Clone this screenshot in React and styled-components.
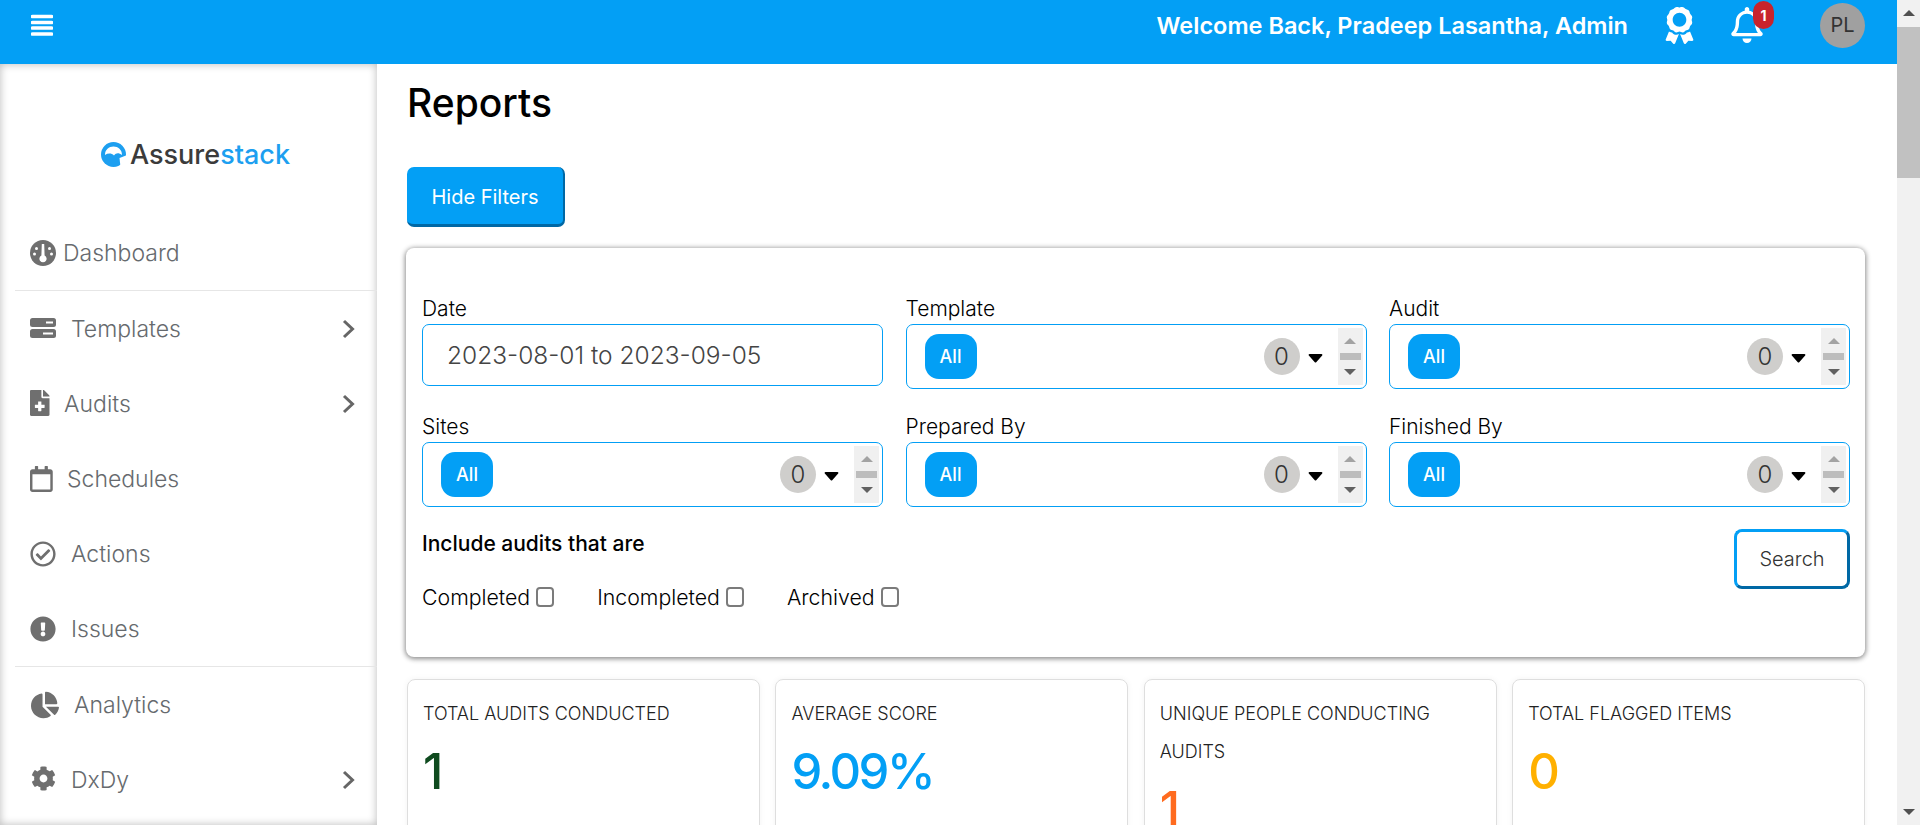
import React from "react";
import styled, { createGlobalStyle } from "styled-components";
import {
  FaAward,
  FaChartPie,
  FaCog,
  FaExclamationCircle,
  FaFileMedical,
  FaRegBell,
  FaRegCalendar,
  FaRegCheckCircle,
} from "react-icons/fa";

const BLUE = "#039ff5";
const DARK_BLUE = "#0068a5";
const GREY = "#6f6f6f";

const GlobalStyle = createGlobalStyle`
  html, body {
    margin: 0;
    height: 100%;
    overflow: hidden;
    background: #fff;
    font-family: Inter, "Liberation Sans", sans-serif;
  }
  * {
    box-sizing: border-box;
  }
`;

const Screen = styled.div`
  display: flex;
  width: 1920px;
  height: 825px;
  overflow: hidden;
`;

const Page = styled.div`
  width: 1897px;
  display: flex;
  flex-direction: column;
`;

const Header = styled.header`
  height: 64px;
  flex: none;
  background: ${BLUE};
  display: flex;
  justify-content: space-between;
  align-items: flex-start;
  padding: 0 32px 0 31px;
  color: #fff;
`;

const MenuButton = styled.svg`
  width: 22px;
  height: 22px;
  margin-top: 14px;
`;

const HeaderRight = styled.div`
  display: flex;
  align-items: center;
  height: 50px;
`;

const Welcome = styled.span`
  font-size: 23.5px;
  font-weight: 600;
  margin-right: 37px;
`;

const AwardIcon = styled(FaAward)`
  width: 29px;
  height: 37px;
  margin-right: 37px;
`;

const BellWrap = styled.div`
  position: relative;
  width: 32px;
  height: 36px;
  margin-right: 57px;
`;

const BellIcon = styled(FaRegBell)`
  width: 32px;
  height: 36px;
`;

const Badge = styled.span`
  position: absolute;
  left: 22px;
  top: -6px;
  width: 21px;
  height: 28px;
  border-radius: 11px;
  background: #c8232c;
  color: #fff;
  font-size: 14px;
  font-weight: 700;
  display: flex;
  align-items: center;
  justify-content: center;
`;

const Avatar = styled.div`
  width: 45px;
  height: 45px;
  border-radius: 50%;
  background: #a0a0a0;
  color: #333;
  font-size: 20px;
  display: flex;
  align-items: center;
  justify-content: center;
`;

const Body = styled.div`
  flex: 1;
  display: flex;
  min-height: 0;
`;

const Sidebar = styled.aside`
  width: 377px;
  flex: none;
  box-shadow: inset 0 0 8px rgba(0, 0, 0, 0.28);
  color: ${GREY};
`;

const LogoBox = styled.div`
  height: 151px;
  display: flex;
  align-items: center;
  padding-left: 101px;
  padding-top: 29px;
`;

const LogoMark = styled.svg`
  width: 25px;
  height: 25px;
  margin-right: 4px;
`;

const LogoText = styled.span`
  font-size: 27px;
  font-weight: 500;
  color: #3b3b3b;
`;

const LogoAccent = styled.span`
  color: #1d9ff0;
`;

const NavRow = styled.div`
  height: 75px;
  display: flex;
  align-items: center;
  padding-left: 30px;
  padding-right: 22px;
`;

const NavIconBox = styled.span`
  display: flex;
  align-items: center;
  width: ${(p) => p.$offset}px;
  flex: none;
  padding-left: ${(p) => p.$nudge || 0}px;
  margin-top: ${(p) => p.$lift || 0}px;
`;

const NavLabel = styled.span`
  flex: 1;
  font-size: 23px;
  font-weight: 300;
  color: #666a6e;
`;

const Chevron = styled.svg`
  width: 13px;
  height: 20px;
`;

const NavDivider = styled.div`
  height: 1px;
  margin-left: 15px;
  background: #e6e6e6;
`;

const Main = styled.main`
  flex: 1;
  min-width: 0;
  padding: 17px 32px 0 29px;
  overflow: hidden;
`;

const Title = styled.h1`
  margin: 0 0 42px 1px;
  font-size: 39px;
  line-height: 44px;
  font-weight: 500;
  color: #000;
`;

const PrimaryButton = styled.button`
  display: block;
  width: 158px;
  height: 60px;
  margin: 0 0 21px 1px;
  padding: 2px 0 0;
  border: 0;
  border-right: 2px solid ${DARK_BLUE};
  border-bottom: 3px solid ${DARK_BLUE};
  border-radius: 7px;
  background: ${BLUE};
  color: #fff;
  font-family: inherit;
  font-size: 20px;
`;

const FilterCard = styled.section`
  height: 409px;
  padding: 46px 15px 0 16px;
  border-radius: 8px;
  box-shadow: 0 1px 5px 1px rgba(0, 0, 0, 0.45);
`;

const FilterGrid = styled.div`
  display: grid;
  grid-template-columns: repeat(3, 461px);
  column-gap: 22.5px;
  row-gap: 23px;
`;

const FieldLabel = styled.label`
  display: block;
  height: 30px;
  line-height: 30px;
  font-size: 21px;
  font-weight: 300;
  color: #000;
`;

const DateBox = styled.div`
  height: 62px;
  padding-left: 24px;
  display: flex;
  align-items: center;
  border: 1px solid ${BLUE};
  border-radius: 7px;
  font-size: 24.5px;
  font-weight: 300;
  color: #444;
`;

const SelectBox = styled.div`
  height: 65px;
  display: flex;
  align-items: center;
  padding: 0 3px 0 18px;
  border: 1px solid ${BLUE};
  border-radius: 7px;
`;

const AllPill = styled.span`
  width: 52px;
  height: 45px;
  border-radius: 14px;
  background: ${BLUE};
  color: #fff;
  font-size: 18px;
  font-weight: 500;
  display: flex;
  align-items: center;
  justify-content: center;
`;

const CountCircle = styled.span`
  width: 36px;
  height: 37px;
  margin-left: auto;
  border-radius: 50%;
  background: #cfcecc;
  color: #333;
  font-size: 24px;
  font-weight: 300;
  display: flex;
  align-items: center;
  justify-content: center;
`;

const Caret = styled.svg`
  width: 15px;
  height: 10px;
  margin: 3px 15px 0 8px;
`;

const Spinner = styled.div`
  width: 25px;
  height: 57px;
  padding: 10px 2px;
  background: #f0f0f0;
  display: flex;
  flex-direction: column;
  align-items: center;
  justify-content: space-between;
`;

const SpinArrow = styled.span`
  width: 0;
  height: 0;
  border-left: 6px solid transparent;
  border-right: 6px solid transparent;
  ${(p) =>
    p.$down
      ? "border-top: 6px solid #616161;"
      : "border-bottom: 6px solid #a3a3a3;"}
`;

const SpinBar = styled.span`
  width: 21px;
  height: 7px;
  background: #bdbdbd;
`;

const FilterFooter = styled.div`
  display: flex;
  justify-content: space-between;
  margin-top: 22px;
`;

const IncludeTitle = styled.div`
  height: 30px;
  line-height: 30px;
  font-size: 21px;
  font-weight: 500;
  color: #000;
`;

const CheckRow = styled.div`
  display: flex;
  gap: 43px;
  margin-top: 23px;
`;

const CheckItem = styled.label`
  display: flex;
  align-items: center;
  gap: 6px;
  height: 30px;
  font-size: 21.3px;
  font-weight: 300;
  color: #000;
`;

const CheckBox = styled.input`
  appearance: none;
  width: 18px;
  height: 20px;
  margin: 0;
  border: 2px solid #7b7b7b;
  border-radius: 4px;
  background: #fff;
`;

const SearchButton = styled.button`
  width: 116px;
  height: 60px;
  border: 3px solid ${BLUE};
  border-right-color: ${DARK_BLUE};
  border-bottom-color: ${DARK_BLUE};
  border-radius: 8px;
  background: #fff;
  color: #333;
  font-family: inherit;
  font-size: 20px;
  font-weight: 300;
`;

const StatGrid = styled.div`
  display: grid;
  grid-template-columns: repeat(4, 1fr);
  gap: 15.5px;
  margin: 22px 0 0 1px;
`;

const StatCard = styled.div`
  height: 260px;
  padding: 15px;
  border: 1px solid #dedede;
  border-radius: 8px;
  box-shadow: 0 0 6px rgba(0, 0, 0, 0.05);
`;

const StatTitle = styled.div`
  font-size: 18px;
  font-weight: 300;
  line-height: 38px;
  color: #222;
`;

const StatValue = styled.div`
  margin-top: 9px;
  font-size: 49px;
  font-weight: 500;
  letter-spacing: -2.5px;
  line-height: 60px;
  color: ${(p) => p.$color};
`;

const ScrollTrack = styled.div`
  width: 23px;
  flex: none;
  background: #f1f1f1;
  display: flex;
  flex-direction: column;
  align-items: center;
  padding: 10px 0;
`;

const ScrollArrow = styled.span`
  width: 0;
  height: 0;
  border-left: 6px solid transparent;
  border-right: 6px solid transparent;
  ${(p) =>
    p.$down
      ? "border-top: 6px solid #505050; margin-top: auto;"
      : "border-bottom: 6px solid #505050;"}
`;

const ScrollThumb = styled.div`
  width: 23px;
  height: 151px;
  margin-top: 11px;
  background: #c1c1c1;
`;

const FILTERS = [
  { label: "Template" },
  { label: "Audit" },
  { label: "Sites" },
  { label: "Prepared By" },
  { label: "Finished By" },
];

const STATS = [
  { title: "TOTAL AUDITS CONDUCTED", value: "1", color: "#0f4b1f" },
  { title: "AVERAGE SCORE", value: "9.09%", color: BLUE },
  { title: "UNIQUE PEOPLE CONDUCTING AUDITS", value: "1", color: "#ff6b1f" },
  { title: "TOTAL FLAGGED ITEMS", value: "0", color: "#ffb000" },
];

const MenuIcon = () => (
  <MenuButton viewBox="0 0 22 22">
    {[2.5, 8.5, 14, 20].map((y) => (
      <line key={y} x1="1.5" x2="20.5" y1={y} y2={y} stroke="#fff" strokeWidth="3.6" strokeLinecap="round" />
    ))}
  </MenuButton>
);

const Logo = () => (
  <LogoBox>
    <LogoMark viewBox="0 0 25 25">
      <circle cx="12.5" cy="12.5" r="12.5" fill="#1d9ff0" />
      <path d="M4 13C4 7.5 8 4.5 12.5 4.5S21 7.5 21 13C17.5 10.5 15 11 13 13.5 10.5 11 7 11 4 13z" fill="#fff" />
      <path d="M25 13.5L18.5 16 19.5 25H25z" fill="#fff" />
    </LogoMark>
    <LogoText>
      Assure<LogoAccent>stack</LogoAccent>
    </LogoText>
  </LogoBox>
);

const GaugeIcon = () => (
  <svg width="26" height="26" viewBox="0 0 26 26">
    <circle cx="13" cy="13" r="13" fill={GREY} />
    <path d="M11.8 4h2.4l.4 11.5a3.6 3.6 0 1 1-3.2 0z" fill="#fff" />
    <circle cx="6.5" cy="8.5" r="1.5" fill="#fff" />
    <circle cx="19.5" cy="8.5" r="1.5" fill="#fff" />
    <circle cx="4.5" cy="14" r="1.5" fill="#fff" />
    <circle cx="21.5" cy="14" r="1.5" fill="#fff" />
  </svg>
);

const StackIcon = () => (
  <svg width="26" height="20" viewBox="0 0 26 20">
    <rect width="26" height="9" y="0" rx="2.5" fill={GREY} />
    <rect width="26" height="9" y="11" rx="2.5" fill={GREY} />
    <rect x="16" y="3.5" width="7" height="2" fill="#fff" />
    <rect x="13" y="14.5" width="10" height="2" fill="#fff" />
  </svg>
);

const ChevronIcon = () => (
  <Chevron viewBox="0 0 13 20">
    <path d="M2 2l8.5 8L2 18" fill="none" stroke="#666" strokeWidth="3" />
  </Chevron>
);

const LEFT = "xMinYMid meet";

const NAV_TOP = [
  { label: "Templates", icon: <StackIcon />, offset: 41, more: true, lift: -1 },
  { label: "Audits", icon: <FaFileMedical size={26} preserveAspectRatio={LEFT} />, offset: 34, more: true, lift: -2 },
  { label: "Schedules", icon: <FaRegCalendar size={26} preserveAspectRatio={LEFT} />, offset: 37 },
  { label: "Actions", icon: <FaRegCheckCircle size={26} />, offset: 41 },
  { label: "Issues", icon: <FaExclamationCircle size={26} />, offset: 41 },
];

const NAV_BOTTOM = [
  { label: "Analytics", icon: <FaChartPie size={28} />, offset: 44, nudge: 1 },
  { label: "DxDy", icon: <FaCog size={25} />, offset: 41, nudge: 1, more: true, lift: -2 },
];

const NavItem = ({ item }) => (
  <NavRow>
    <NavIconBox $offset={item.offset} $nudge={item.nudge} $lift={item.lift}>
      {item.icon}
    </NavIconBox>
    <NavLabel>{item.label}</NavLabel>
    {item.more && <ChevronIcon />}
  </NavRow>
);

const FilterSelect = ({ label }) => (
  <div>
    <FieldLabel>{label}</FieldLabel>
    <SelectBox>
      <AllPill>All</AllPill>
      <CountCircle>0</CountCircle>
      <Caret viewBox="0 0 15 10">
        <path d="M1.5 1h12a1 1 0 0 1 .7 1.6L8.2 9.2a1 1 0 0 1-1.4 0L.8 2.6A1 1 0 0 1 1.5 1z" fill="#000" />
      </Caret>
      <Spinner>
        <SpinArrow />
        <SpinBar />
        <SpinArrow $down />
      </Spinner>
    </SelectBox>
  </div>
);

const App = () => (
  <Screen>
    <GlobalStyle />
    <Page>
      <Header>
        <MenuIcon />
        <HeaderRight>
          <Welcome>Welcome Back, Pradeep Lasantha, Admin</Welcome>
          <AwardIcon />
          <BellWrap>
            <BellIcon />
            <Badge>1</Badge>
          </BellWrap>
          <Avatar>PL</Avatar>
        </HeaderRight>
      </Header>
      <Body>
        <Sidebar>
          <Logo />
          <NavItem item={{ label: "Dashboard", icon: <GaugeIcon />, offset: 33 }} />
          <NavDivider />
          {NAV_TOP.map((item) => (
            <NavItem key={item.label} item={item} />
          ))}
          <NavDivider />
          {NAV_BOTTOM.map((item) => (
            <NavItem key={item.label} item={item} />
          ))}
        </Sidebar>
        <Main>
          <Title>Reports</Title>
          <PrimaryButton>Hide Filters</PrimaryButton>
          <FilterCard>
            <FilterGrid>
              <div>
                <FieldLabel>Date</FieldLabel>
                <DateBox>2023-08-01 to 2023-09-05</DateBox>
              </div>
              {FILTERS.map((f) => (
                <FilterSelect key={f.label} label={f.label} />
              ))}
            </FilterGrid>
            <FilterFooter>
              <div>
                <IncludeTitle>Include audits that are</IncludeTitle>
                <CheckRow>
                  {["Completed", "Incompleted", "Archived"].map((name) => (
                    <CheckItem key={name}>
                      {name}
                      <CheckBox type="checkbox" />
                    </CheckItem>
                  ))}
                </CheckRow>
              </div>
              <SearchButton>Search</SearchButton>
            </FilterFooter>
          </FilterCard>
          <StatGrid>
            {STATS.map((s) => (
              <StatCard key={s.title}>
                <StatTitle>{s.title}</StatTitle>
                <StatValue $color={s.color}>{s.value}</StatValue>
              </StatCard>
            ))}
          </StatGrid>
        </Main>
      </Body>
    </Page>
    <ScrollTrack>
      <ScrollArrow />
      <ScrollThumb />
      <ScrollArrow $down />
    </ScrollTrack>
  </Screen>
);

export default App;
